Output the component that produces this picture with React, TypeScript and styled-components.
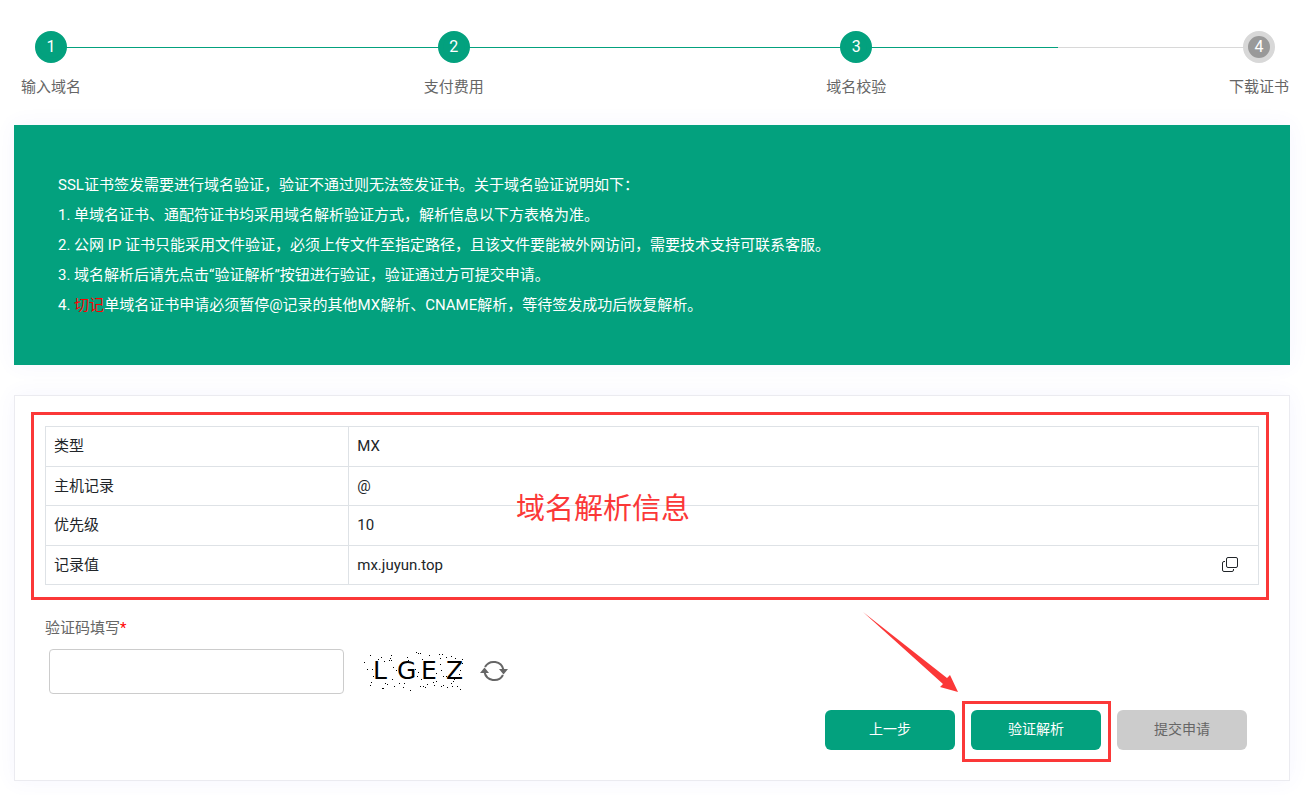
import React, { useState } from "react";
import styled, { createGlobalStyle, css } from "styled-components";

const GREEN = "#03a17e";
const MARK = "#fb3838";

const GlobalStyle = createGlobalStyle`
  *, *::before, *::after { box-sizing: border-box; }
  body {
    margin: 0;
    background: #fff;
    color: #212529;
    font-family: Roboto, "Noto Sans CJK SC", sans-serif;
    font-size: 15px;
    line-height: 30px;
  }
  button, input { font: inherit; }
`;

const Page = styled.main`
  display: flex;
  flex-direction: column;
  gap: 30px;
  padding: 31px 21px 14px 14px;
`;

const Steps = styled.ol`
  position: relative;
  display: flex;
  justify-content: space-between;
  margin: 0;
  padding: 0 1px 0 7px;
  list-style: none;
  color: #666;

  &::before {
    content: "";
    position: absolute;
    top: 16px;
    left: 37px;
    right: 31px;
    height: 1px;
    background: linear-gradient(
      to right,
      ${GREEN} calc(100% * 5 / 6),
      #d8d8d8 calc(100% * 5 / 6)
    );
  }
`;

const Step = styled.li`
  position: relative;
  display: flex;
  flex-direction: column;
  align-items: center;
  gap: 8px;
  line-height: 32px;
`;

const StepNumber = styled.span<{ $done: boolean }>`
  width: 32px;
  height: 32px;
  border-radius: 50%;
  border: 5px solid ${(p) => (p.$done ? GREEN : "#d8d8d8")};
  background: ${(p) => (p.$done ? GREEN : "#999")};
  color: #fff;
  font-size: 16px;
  line-height: 22px;
  text-align: center;
`;

const Top = styled.div`
  display: flex;
  flex-direction: column;
  gap: 22px;
`;

const Notice = styled.section`
  padding: 45px 44px;
  background: ${GREEN};
  box-shadow: 0 0 20px rgba(82, 85, 240, 0.06);
  color: #fff;
`;

const NoticeLine = styled.p`
  margin: 0;
`;

const Warn = styled.span`
  color: #f00;
`;

const Card = styled.form`
  display: flex;
  flex-direction: column;
  padding: 30px;
  border: 1px solid #ebebf0;
  background: #fff;
  box-shadow: 0 0 20px rgba(82, 85, 240, 0.06);
`;

const highlight = css`
  position: absolute;
  border: 3px solid ${MARK};
  content: "";
  pointer-events: none;
`;

const RecordArea = styled.div`
  position: relative;

  &::after {
    ${highlight}
    inset: -14px -10px -15px -14px;
  }
`;

const Caption = styled.span`
  position: absolute;
  top: 61px;
  left: 471px;
  color: ${MARK};
  font-size: 29px;
  line-height: 44px;
`;

const RecordTable = styled.table`
  width: 100%;
  height: 159px;
  border-collapse: collapse;
  line-height: 22px;

  th,
  td {
    padding: 8px;
    border: 1px solid #dee2e6;
    text-align: left;
    font-weight: 400;
  }

  th {
    width: 25%;
  }
`;

const ValueCell = styled.div`
  display: flex;
  align-items: center;
  justify-content: space-between;
  padding-right: 12px;
`;

const IconButton = styled.button`
  display: flex;
  padding: 0;
  border: 0;
  background: none;
  color: inherit;
  cursor: pointer;
`;

const CodeField = styled.div`
  display: flex;
  flex-direction: column;
  padding-top: 28px;
`;

const CodeLabel = styled.label`
  color: #666;
`;

const CodeRow = styled.div`
  display: flex;
  align-items: center;
  gap: 15px;
  padding: 6px 4px 0;
`;

const CodeInput = styled.input`
  width: 295px;
  height: 45px;
  margin-right: 5px;
  padding: 0 12px;
  border: 1px solid #ccc;
  border-radius: 4px;
  background: #fff;
`;

const Actions = styled.div`
  display: flex;
  justify-content: flex-end;
  gap: 16px;
  padding: 16px 12px 0;
`;

const ActionSlot = styled.div<{ $marked?: boolean }>`
  position: relative;

  ${(p) =>
    p.$marked &&
    css`
      &::after {
        ${highlight}
        inset: -9px -10px -12px -9px;
      }
    `}
`;

const ActionButton = styled.button`
  display: block;
  width: 130px;
  height: 40px;
  padding: 0 0 2px;
  border: 0;
  border-radius: 6px;
  background: ${GREEN};
  color: #fff;
  font-size: 14px;
  line-height: 38px;
  cursor: pointer;

  &:disabled {
    background: #ccc;
    color: #666;
    cursor: default;
  }
`;

const Arrow = styled.svg`
  position: absolute;
  right: 143px;
  bottom: 58px;
  pointer-events: none;
`;

const steps = ["输入域名", "支付费用", "域名校验", "下载证书"];

const records = [
  { name: "类型", value: "MX" },
  { name: "主机记录", value: "@" },
  { name: "优先级", value: "10" },
  { name: "记录值", value: "mx.juyun.top", copy: true },
];

const specks =
  "0,10 3,17 6,3 14,7 17,5 27,3 26,6 27,8 25,8 20,9 8,17 6,33 7,30 9,24 18,36 19,36 21,31 23,32 28,27 30,34 35,31 39,35 40,31 46,38 29,15 35,20 32,18 52,0 54,1 56,1 43,5 44,8 65,3 75,2 78,2 76,6 82,5 87,4 91,6 93,9 98,11 96,18 76,12 77,18 72,21 79,24 82,24 54,20 53,24 57,27 56,34 61,35 63,32 69,30 72,29 70,33 77,34 79,33 83,35 87,31 89,29 88,34 93,34 96,37 51,17 58,7 59,34 98,7 95,22 90,27"
    .split(" ")
    .map((p) => p.split(",").map(Number));

function CopyIcon() {
  return (
    <svg width="16" height="16" viewBox="0 0 16 16" fill="none" stroke="currentColor">
      <rect x="4.5" y="0.5" width="11" height="10" rx="1.5" />
      <path d="M3 4.500H2A1.500 1.500 0 0 0 .5 6v7A1.500 1.500 0 0 0 2 14.500h8a1.500 1.500 0 0 0 1.500-1.500v-1" />
    </svg>
  );
}

function Captcha() {
  return (
    <svg width="101" height="40" viewBox="0 0 101 40" role="img" aria-label="LGEZ">
      <g fill="#000" shapeRendering="crispEdges">
        {specks.map(([x, y]) => (
          <rect key={`${x}-${y}`} x={x} y={y} width="1" height="1" />
        ))}
      </g>
      <g fill="#000" fontFamily="DejaVu Sans, sans-serif" fontSize="25">
        <text x="9" y="27">L</text>
        <text x="33" y="27">G</text>
        <text x="57" y="27">E</text>
        <text x="82" y="27">Z</text>
      </g>
    </svg>
  );
}

function RefreshIcon() {
  return (
    <svg width="28" height="26" viewBox="0 0 28 26" fill="none" stroke="#666" strokeWidth="2">
      <path d="M5 8a10 10 0 0 1 18.500 3M23 16A10 10 0 0 1 4.500 13" />
      <path d="M0 14 4.500 8.500 9 14zM19 10h9l-4.500 5.500z" fill="#666" stroke="none" />
    </svg>
  );
}

export default function App() {
  const [code, setCode] = useState("");
  return (
    <>
      <GlobalStyle />
      <Page>
        <Top>
          <Steps>
            {steps.map((label, i) => (
              <Step key={label}>
                <StepNumber $done={i < 3}>{i + 1}</StepNumber>
                {label}
              </Step>
            ))}
          </Steps>
          <Notice>
            <NoticeLine>SSL证书签发需要进行域名验证，验证不通过则无法签发证书。关于域名验证说明如下：</NoticeLine>
            <NoticeLine>1. 单域名证书、通配符证书均采用域名解析验证方式，解析信息以下方表格为准。</NoticeLine>
            <NoticeLine>2. 公网 IP 证书只能采用文件验证，必须上传文件至指定路径，且该文件要能被外网访问，需要技术支持可联系客服。</NoticeLine>
            <NoticeLine>3. 域名解析后请先点击“验证解析”按钮进行验证，验证通过方可提交申请。</NoticeLine>
            <NoticeLine>
              4. <Warn>切记</Warn>单域名证书申请必须暂停@记录的其他MX解析、CNAME解析，等待签发成功后恢复解析。
            </NoticeLine>
          </Notice>
        </Top>
        <Card onSubmit={(e) => e.preventDefault()}>
          <RecordArea>
            <RecordTable>
              <tbody>
                {records.map((r) => (
                  <tr key={r.name}>
                    <th scope="row">{r.name}</th>
                    <td>
                      <ValueCell>
                        {r.value}
                        {r.copy && (
                          <IconButton type="button" aria-label="复制">
                            <CopyIcon />
                          </IconButton>
                        )}
                      </ValueCell>
                    </td>
                  </tr>
                ))}
              </tbody>
            </RecordTable>
            <Caption>域名解析信息</Caption>
          </RecordArea>
          <CodeField>
            <CodeLabel htmlFor="code">
              验证码填写<Warn>*</Warn>
            </CodeLabel>
            <CodeRow>
              <CodeInput id="code" value={code} onChange={(e) => setCode(e.target.value)} />
              <Captcha />
              <IconButton type="button" aria-label="刷新验证码">
                <RefreshIcon />
              </IconButton>
            </CodeRow>
          </CodeField>
          <Actions>
            <ActionSlot>
              <ActionButton type="button">上一步</ActionButton>
            </ActionSlot>
            <ActionSlot $marked>
              <ActionButton type="button">验证解析</ActionButton>
              <Arrow width="95" height="80" viewBox="0 0 95 80" fill={MARK} aria-hidden="true">
                <path d="M0 0 84 66 87 63 95 80 77 75 80 72z" />
              </Arrow>
            </ActionSlot>
            <ActionSlot>
              <ActionButton type="submit" disabled>提交申请</ActionButton>
            </ActionSlot>
          </Actions>
        </Card>
      </Page>
    </>
  );
}
